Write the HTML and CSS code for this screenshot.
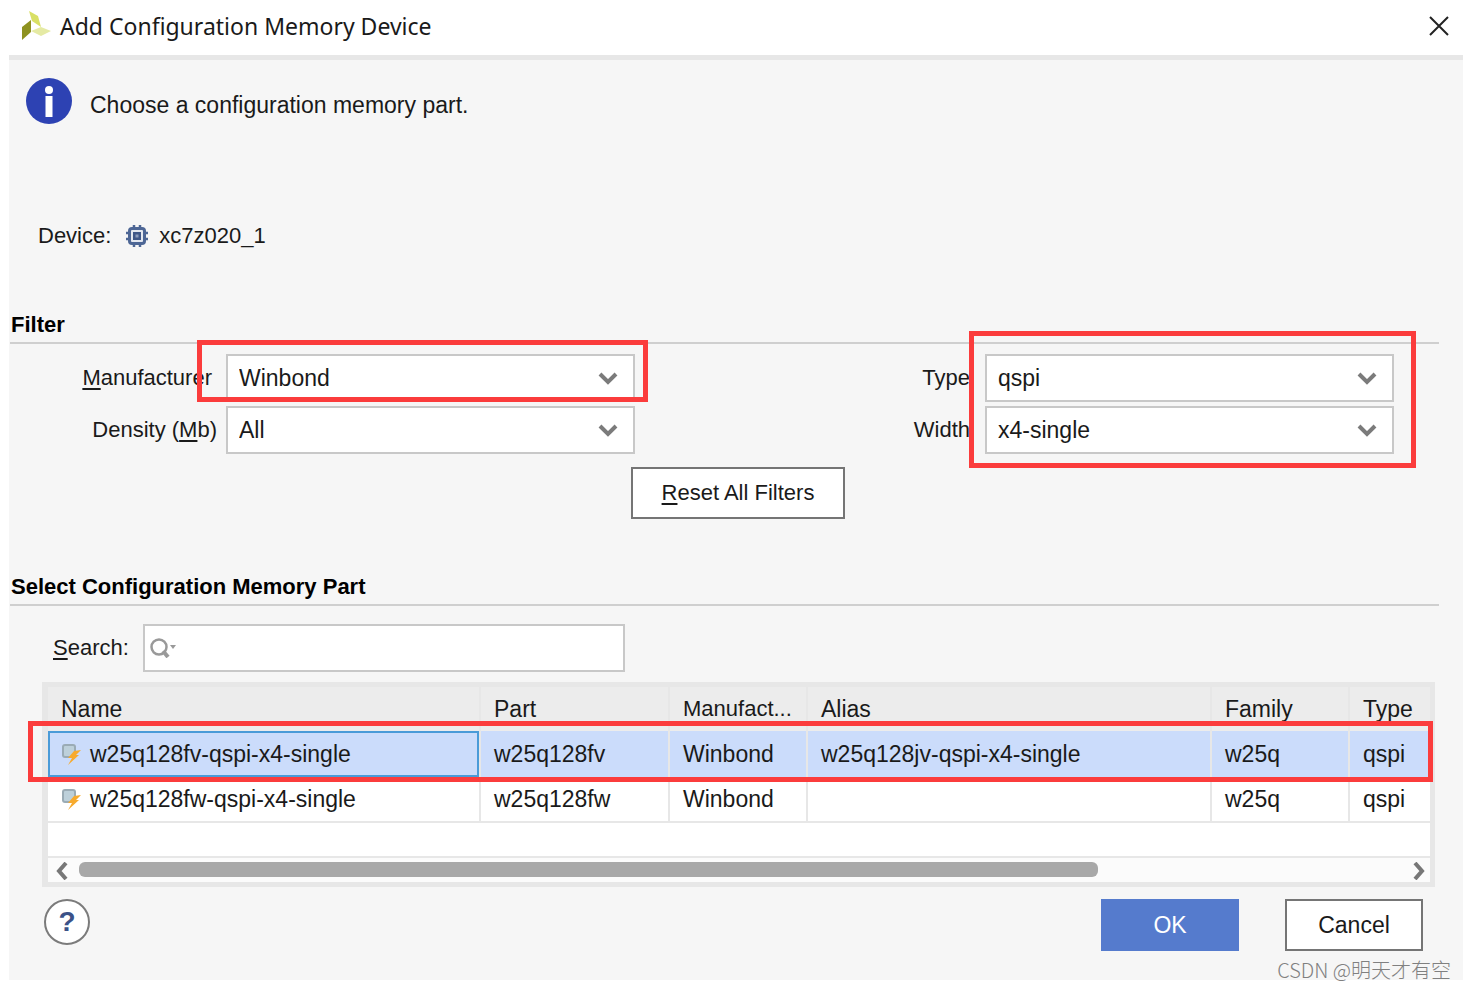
FILE: index.html
```html
<!DOCTYPE html>
<html lang="en">
<head>
<meta charset="utf-8">
<title>Add Configuration Memory Device</title>
<link rel="stylesheet" href="styles.css">
</head>
<body>
<main class="dialog">
  <header class="titlebar">
    <svg class="logo" viewBox="0 0 30 30" aria-hidden="true">
      <path d="M8 0l9 5 3 11-9-6z" fill="#d9e065"/>
      <path d="M1 16l9-7v12l-9 8z" fill="#8e9220"/>
      <path d="M10 20l10-4 10 4-10 5z" fill="#e5eaa4"/>
    </svg>
    <h1 class="title">Add Configuration Memory Device</h1>
    <button class="close" type="button" aria-label="Close">
      <svg viewBox="0 0 20 20"><path d="M1 1l18 18M19 1L1 19" fill="none" stroke="#222" stroke-width="2"/></svg>
    </button>
  </header>

  <section class="intro">
    <svg class="info" viewBox="0 0 46 46" aria-hidden="true">
      <circle cx="23" cy="23" r="23" fill="#2d42b3"/>
      <circle cx="23" cy="12" r="4" fill="#fff"/>
      <rect x="19.5" y="18" width="7" height="21" fill="#fff"/>
    </svg>
    <p class="intro-text">Choose a configuration memory part.</p>
  </section>

  <section class="device">
    <span>Device:</span>
    <svg class="chip" viewBox="0 0 22 22" aria-hidden="true">
      <path d="M8 0v22M14 0v22M0 8h22M0 14h22" stroke="#4d6695" stroke-width="2.5"/>
      <rect x="2" y="2" width="18" height="18" rx="4" fill="#4d6695"/>
      <rect x="5" y="5" width="12" height="12" rx="1" fill="#e4e8f0"/>
      <rect x="7" y="7" width="8" height="8" fill="#3f5788"/>
      <rect x="9.5" y="9.5" width="3" height="3" fill="#8c9cbc"/>
    </svg>
    <span>xc7z020_1</span>
  </section>

  <section class="filter">
    <h2 class="heading">Filter</h2>
    <div class="filter-grid">
      <label class="label" for="manufacturer"><u>M</u>anufacturer</label>
      <div class="field">
        <select id="manufacturer" class="select"><option>Winbond</option></select>
        <svg class="chevron" viewBox="0 0 20 14"><path d="M2 3l8 8 8-8" fill="none" stroke="#7b7b7b" stroke-width="4"/></svg>
        <span class="mark mark-manufacturer"></span>
      </div>
      <label class="label label-right" for="type">Type</label>
      <div class="field">
        <select id="type" class="select"><option>qspi</option></select>
        <svg class="chevron" viewBox="0 0 20 14"><path d="M2 3l8 8 8-8" fill="none" stroke="#7b7b7b" stroke-width="4"/></svg>
        <span class="mark mark-type"></span>
      </div>
      <label class="label label-wide" for="density">Density (<u>M</u>b)</label>
      <div class="field">
        <select id="density" class="select"><option>All</option></select>
        <svg class="chevron" viewBox="0 0 20 14"><path d="M2 3l8 8 8-8" fill="none" stroke="#7b7b7b" stroke-width="4"/></svg>
      </div>
      <label class="label label-right" for="width">Width</label>
      <div class="field">
        <select id="width" class="select"><option>x4-single</option></select>
        <svg class="chevron" viewBox="0 0 20 14"><path d="M2 3l8 8 8-8" fill="none" stroke="#7b7b7b" stroke-width="4"/></svg>
      </div>
    </div>
    <div class="reset-row">
      <button class="button reset" type="button"><span><u>R</u>eset All Filters</span></button>
    </div>
  </section>

  <section class="parts">
    <h2 class="heading">Select Configuration Memory Part</h2>
    <div class="search-row">
      <label class="search-label" for="search"><u>S</u>earch:</label>
      <div class="search-field">
        <input id="search" class="search" type="text">
        <svg class="search-icon" viewBox="0 0 28 20" aria-hidden="true">
          <circle cx="9" cy="9" r="7.5" fill="none" stroke="#999" stroke-width="2.5"/>
          <path d="M13 13l5 6" stroke="#999" stroke-width="4"/>
          <path d="M20 7h6l-3 4z" fill="#999"/>
        </svg>
      </div>
    </div>

    <div class="table-box">
      <table class="table">
        <colgroup><col><col class="c-part"><col class="c-mfr"><col class="c-alias"><col class="c-family"><col class="c-type"></colgroup>
        <thead>
          <tr><th>Name</th><th>Part</th><th class="clipped">Manufact...</th><th>Alias</th><th>Family</th><th>Type</th></tr>
        </thead>
        <tbody>
          <tr class="selected">
            <td class="focused"><span class="name">
              <svg class="part-icon" viewBox="0 0 20 22" aria-hidden="true"><rect x="1" y="1" width="14" height="14" rx="3" fill="#9aabb5"/><rect x="3" y="3" width="10" height="10" rx="1" fill="#bdd0da"/><path d="M20 7l-7 1-6 7h4l-4 7 11-10h-3z" fill="#f7aa2d"/></svg>
              w25q128fv-qspi-x4-single</span><span class="mark mark-row"></span></td>
            <td>w25q128fv</td><td>Winbond</td><td>w25q128jv-qspi-x4-single</td><td>w25q</td><td>qspi</td>
          </tr>
          <tr>
            <td><span class="name">
              <svg class="part-icon" viewBox="0 0 20 22" aria-hidden="true"><rect x="1" y="1" width="14" height="14" rx="3" fill="#9aabb5"/><rect x="3" y="3" width="10" height="10" rx="1" fill="#bdd0da"/><path d="M20 7l-7 1-6 7h4l-4 7 11-10h-3z" fill="#f7aa2d"/></svg>
              w25q128fw-qspi-x4-single</span></td>
            <td>w25q128fw</td><td>Winbond</td><td></td><td>w25q</td><td>qspi</td>
          </tr>
        </tbody>
      </table>
      <div class="scrollbar">
        <button class="arrow" type="button" aria-label="Scroll left"><svg viewBox="0 0 12 18"><path d="M10 1L3 9l7 8" fill="none" stroke="#777" stroke-width="4"/></svg></button>
        <div class="track"><div class="thumb"></div></div>
        <button class="arrow" type="button" aria-label="Scroll right"><svg viewBox="0 0 12 18"><path d="M2 1l7 8-7 8" fill="none" stroke="#777" stroke-width="4"/></svg></button>
      </div>
    </div>
  </section>

  <footer class="actions">
    <button class="help" type="button" aria-label="Help">?</button>
    <button class="button ok" type="button">OK</button>
    <button class="button cancel" type="button">Cancel</button>
  </footer>
  <span class="watermark">CSDN @明天才有空</span>
</main>
</body>
</html>
```
FILE: styles.css
```css
* { box-sizing: border-box; }

body {
  margin: 0;
  background: #fff;
  color: #1a1a1a;
  font: 23px/28px "Liberation Sans", Arial, sans-serif;
}

h1, h2, p { margin: 0; }
svg { display: block; }
u { text-decoration-thickness: 2px; text-underline-offset: 3px; text-decoration-skip-ink: none; }

button, input, select {
  margin: 0;
  font: inherit;
  color: inherit;
}

.dialog {
  position: relative;
  margin: 0 2px 8px 9px;
  padding-bottom: 29px;
  background: #f6f6f6;
}

.titlebar {
  display: flex;
  align-items: center;
  height: 60px;
  padding: 0 14px 4px 12px;
  background: #fff;
  border-bottom: 5px solid #e7e7e7;
}
.logo { width: 30px; height: 30px; }
.title {
  flex: 1;
  margin-left: 9px;
  font: 400 23px/32px "Noto Sans", "Open Sans", sans-serif;
}
.close { padding: 0; border: 0; background: none; }
.close svg { width: 20px; height: 20px; }

.intro {
  display: flex;
  align-items: center;
  gap: 18px;
  padding: 18px 17px 0;
}
.info { width: 46px; height: 46px; }
.intro-text { padding-top: 8px; }

.device {
  display: flex;
  align-items: center;
  padding: 98px 29px 0;
  font-size: 22px;
}
.chip { width: 22px; height: 22px; margin: 0 11px 0 15px; }

.filter { padding-top: 60px; }
.heading {
  margin: 0 24px 0 1px;
  padding: 1px 1px 3px;
  border-bottom: 2px solid #cfcfcf;
  color: #000;
  font-size: 22px;
  line-height: 28px;
}

.filter-grid {
  display: grid;
  grid-template-columns: 217px 1fr 350px 1fr;
  row-gap: 4px;
  align-items: center;
  padding: 10px 69px 0 0;
}
.label { padding-right: 14px; text-align: right; font-size: 22px; }
.label-wide { padding-right: 9px; }
.label-right { padding-right: 15px; }
.field { position: relative; }
.select {
  display: block;
  width: 100%;
  height: 48px;
  padding: 0 40px 0 11px;
  appearance: none;
  background: #fff;
  border: 2px solid #c8c8c8;
  border-radius: 0;
}
.chevron {
  position: absolute;
  right: 17px;
  top: 17px;
  width: 20px;
  height: 14px;
  pointer-events: none;
}

.mark {
  position: absolute;
  z-index: 1;
  border: 5px solid #fb3c3c;
  pointer-events: none;
}
.mark-manufacturer { inset: -14px -13px 0 -29px; }
.mark-type { inset: -23px -22px -66px -16px; }
.mark-row { inset: -10px -3px -5px -20px; }

.reset-row { display: flex; justify-content: center; padding: 13px 0 0 4px; }
.button {
  height: 52px;
  padding: 0 0 1px;
  background: #fff;
  border: 2px solid #757575;
}
.reset { width: 214px; font-size: 22px; }

.parts { padding-top: 53px; }
.search-row {
  display: flex;
  align-items: center;
  gap: 14px;
  padding: 18px 44px 0;
}
.search-label { font-size: 22px; }
.search-field { position: relative; width: 482px; }
.search {
  display: block;
  width: 100%;
  height: 48px;
  padding: 0 8px 0 40px;
  background: #fff;
  border: 2px solid #c8c8c8;
}
.search-icon { position: absolute; left: 7px; top: 14px; width: 28px; height: 20px; }

.table-box {
  margin: 10px 28px 0 33px;
  background: #fff;
  border: 5px solid #e7e7e7;
  border-left-width: 6px;
}
.table {
  width: 100%;
  table-layout: fixed;
  border-collapse: separate;
  border-spacing: 0;
}
.c-part { width: 189px; }
.c-mfr { width: 138px; }
.c-alias { width: 404px; }
.c-family { width: 138px; }
.c-type { width: 80px; }
.table th, .table td {
  height: 46px;
  padding: 0 0 1px 13px;
  border-right: 2px solid #e7e7e7;
  font-weight: 400;
  text-align: left;
  white-space: nowrap;
}
.table th { height: 44px; padding-top: 1px; background: #ececec; }
.table .clipped { font-size: 22px; }
.table td { border-bottom: 2px solid #e7e7e7; }
.table th:last-child, .table td:last-child { border-right: 0; }
.selected { position: relative; background: #cbdcfb; }
.table .selected td { border-bottom: 0; }
.table .selected .focused { box-shadow: inset 0 0 0 2px #4a9bd8; }
.name { display: flex; align-items: center; gap: 9px; }
.part-icon { width: 20px; height: 22px; }

.scrollbar {
  display: flex;
  align-items: center;
  height: 26px;
  margin-top: 33px;
  padding: 0 5px 2px 8px;
  background: #fbfbfb;
  border-top: 2px solid #e7e7e7;
}
.arrow { padding: 3px 0 0; border: 0; background: none; }
.arrow svg { width: 12px; height: 18px; }
.track { flex: 1; padding: 0 11px; }
.thumb { width: 77%; height: 15px; border-radius: 6px; background: #a8a8a8; }

.actions {
  display: flex;
  align-items: flex-start;
  padding: 12px 40px 0 35px;
}
.help {
  width: 46px;
  height: 46px;
  margin-right: auto;
  padding: 0;
  background: #fff;
  border: 2px solid #7b7b7b;
  border-radius: 50%;
  color: #3b5288;
  font-size: 28px;
  font-weight: 700;
}
.ok { width: 138px; margin-right: 46px; background: #557bcd; border-color: #557bcd; color: #fff; }
.cancel { width: 138px; }

.watermark {
  position: absolute;
  right: 12px;
  bottom: -4px;
  color: #808080;
  font: 300 20px/28px "Noto Sans CJK SC", sans-serif;
}
```
